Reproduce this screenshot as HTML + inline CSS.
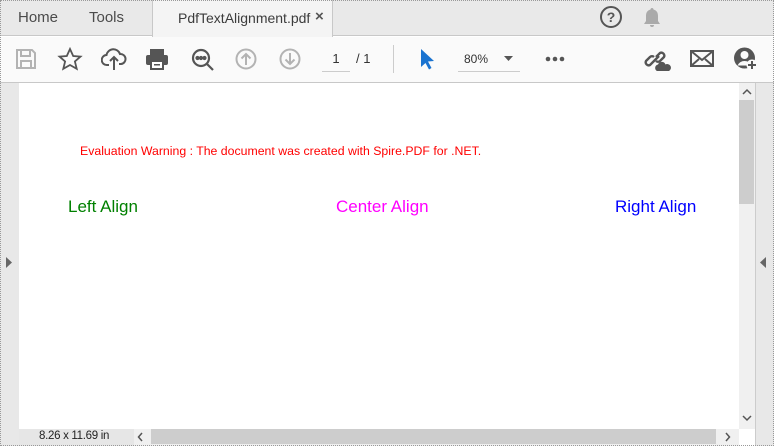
<!DOCTYPE html>
<html><head><meta charset="utf-8"><style>
*{margin:0;padding:0;box-sizing:border-box}
body{width:774px;height:446px;overflow:hidden;position:relative;background:#fff;font-family:"Liberation Sans",sans-serif}
.a{position:absolute}
</style></head><body>
<div class="a" style="left:0;top:0;width:774px;height:36px;background:#e9e9e9;border-bottom:1px solid #c8c8c8"></div>
<div class="a" style="left:18px;top:9px;font-size:15px;color:#4b4b4b">Home</div>
<div class="a" style="left:89px;top:9px;font-size:15px;color:#4b4b4b">Tools</div>
<div class="a" style="left:152px;top:0;width:181px;height:37px;background:#f4f4f4;border-left:1px solid #c8c8c8;border-right:1px solid #c8c8c8"></div>
<div class="a" style="left:178px;top:10px;font-size:14px;color:#3c3c3c">PdfTextAlignment.pdf</div>
<div class="a" style="left:315px;top:8px;font-size:15px;color:#555;font-weight:bold">×</div>
<svg class="a" style="left:599px;top:5px" width="24" height="24"><circle cx="12" cy="12" r="10" fill="none" stroke="#555" stroke-width="2"/><text x="12" y="17" font-size="14" font-weight="bold" text-anchor="middle" fill="#555" font-family="Liberation Sans">?</text></svg>
<svg class="a" style="left:641px;top:6px" width="22" height="22"><path d="M11 2c1 0 1.5.8 1.5 1.5C16 4.5 17 7 17 10v5l2 3H3l2-3v-5c0-3 1-5.5 4.5-6.5C9.5 2.8 10 2 11 2zM9 19h4c0 1.5-1 2-2 2s-2-.5-2-2z" fill="#aaa"/></svg>
<div class="a" style="left:0;top:37px;width:774px;height:46px;background:#fafafa;border-bottom:1px solid #c8c8c8"></div>
<svg class="a" style="left:14px;top:47px" width="24" height="24" fill="none" stroke="#b3b3b3" stroke-width="2"><path d="M3 3h15l3 3v15H3z"/><path d="M7 3v6h9V3M7 21v-7h10v7"/></svg>
<svg class="a" style="left:57px;top:47px" width="26" height="24" fill="none" stroke="#555" stroke-width="1.8"><path d="M13 2l3.2 7 7.3.6-5.6 4.9 1.8 7.3L13 18l-6.7 3.8 1.8-7.3L2.5 9.6 9.8 9z"/></svg>
<svg class="a" style="left:101px;top:46px" width="26" height="26" fill="none" stroke="#555" stroke-width="2"><path d="M8 19H6a5 5 0 0 1-.5-10A7 7 0 0 1 19 8a5 5 0 0 1 1 10h-2"/><path d="M13 24V11M9 15l4-4 4 4"/></svg>
<svg class="a" style="left:145px;top:47px" width="24" height="24"><rect x="5" y="2" width="14" height="6" fill="#555"/><rect x="1" y="8" width="22" height="10" rx="2" fill="#555"/><rect x="6" y="14" width="12" height="8" fill="#fff" stroke="#555" stroke-width="2"/><rect x="9" y="17" width="6" height="1.5" fill="#555"/></svg>
<svg class="a" style="left:190px;top:47px" width="26" height="26" fill="none" stroke="#555" stroke-width="2.2"><circle cx="11" cy="11" r="8"/><path d="M17 17l6 6"/><circle cx="7.5" cy="11" r="1" fill="#555"/><circle cx="11" cy="11" r="1" fill="#555"/><circle cx="14.5" cy="11" r="1" fill="#555"/></svg>
<svg class="a" style="left:235px;top:48px" width="22" height="22" fill="none" stroke="#b3b3b3" stroke-width="2"><circle cx="11" cy="11" r="9.5"/><path d="M11 17V6M6.5 10.5L11 6l4.5 4.5"/></svg>
<svg class="a" style="left:279px;top:48px" width="22" height="22" fill="none" stroke="#b3b3b3" stroke-width="2"><circle cx="11" cy="11" r="9.5"/><path d="M11 5v11M6.5 11.5L11 16l4.5-4.5"/></svg>
<div class="a" style="left:322px;top:51px;width:28px;font-size:13px;color:#333;text-align:center">1</div>
<div class="a" style="left:322px;top:71px;width:28px;height:1px;background:#ccc"></div>
<div class="a" style="left:356px;top:51px;font-size:13px;color:#333">/ 1</div>
<div class="a" style="left:393px;top:45px;width:1px;height:28px;background:#ccc"></div>
<svg class="a" style="left:419px;top:48px" width="18" height="22"><path d="M2 1l13 12-6 .5 3.5 6.5-2.5 1.5-3.5-6.5L2 19z" fill="#1a73d0"/></svg>
<div class="a" style="left:464px;top:52px;font-size:12px;color:#333">80%</div>
<svg class="a" style="left:504px;top:56px" width="10" height="6"><path d="M0 0h9l-4.5 5z" fill="#555"/></svg>
<div class="a" style="left:458px;top:71px;width:62px;height:1px;background:#ccc"></div>
<svg class="a" style="left:545px;top:56px" width="20" height="6"><circle cx="3" cy="3" r="2.3" fill="#555"/><circle cx="10" cy="3" r="2.3" fill="#555"/><circle cx="17" cy="3" r="2.3" fill="#555"/></svg>
<svg class="a" style="left:644px;top:47px" width="28" height="26" fill="none" stroke="#555" stroke-width="2.4"><path d="M10 14l-4 4a3 3 0 0 1-4-4l4-4a3 3 0 0 1 4 0M12 10l4-4a3 3 0 0 1 4 4l-4 4a3 3 0 0 1-4 0M9 15l6-6"/><path d="M13 24a3.5 3.5 0 0 1 1-6.5 4 4 0 0 1 7.5 0A3.300 3.300 0 0 1 25 24z" fill="#555" stroke="none"/></svg>
<svg class="a" style="left:690px;top:49px" width="24" height="20" fill="none" stroke="#555" stroke-width="2"><rect x="1" y="2" width="22" height="15"/><path d="M1 2l11 9 11-9M1 17l8-7M23 17l-8-7"/></svg>
<svg class="a" style="left:733px;top:46px" width="26" height="26"><circle cx="11.5" cy="12" r="10.5" fill="#555"/><circle cx="11.5" cy="9" r="4" fill="#fafafa"/><path d="M4.5 19.5a7.5 7 0 0 1 14 0" fill="#fafafa"/><circle cx="19" cy="19" r="5.5" fill="#fafafa"/><path d="M19 15v8M15 19h8" stroke="#555" stroke-width="2"/></svg>
<div class="a" style="left:0;top:83px;width:19px;height:363px;background:#e8e8e8"></div>
<svg class="a" style="left:6px;top:257px" width="8" height="12"><path d="M0 0l6 5.5L0 11z" fill="#666"/></svg>
<div class="a" style="left:739px;top:83px;width:16px;height:346px;background:#f0f0f0"></div>
<div class="a" style="left:739px;top:100px;width:15px;height:104px;background:#cdcdcd"></div>
<svg class="a" style="left:742px;top:88px" width="10" height="7" fill="none" stroke="#555" stroke-width="1.5"><path d="M1 6l4-4 4 4"/></svg>
<svg class="a" style="left:742px;top:415px" width="10" height="7" fill="none" stroke="#555" stroke-width="1.5"><path d="M1 1l4 4 4-4"/></svg>
<div class="a" style="left:755px;top:83px;width:19px;height:363px;background:#e8e8e8;border-left:1px solid #ccc"></div>
<svg class="a" style="left:760px;top:257px" width="8" height="12"><path d="M6 0L0 5.5 6 11z" fill="#666"/></svg>
<div class="a" style="left:80px;top:144px;font-size:12.3px;color:#ff0000;white-space:nowrap">Evaluation Warning : The document was created with Spire.PDF for .NET.</div>
<div class="a" style="left:68px;top:197px;font-size:17px;color:#008000;white-space:nowrap">Left Align</div>
<div class="a" style="left:336px;top:197px;font-size:17px;color:#ff00ff;white-space:nowrap">Center Align</div>
<div class="a" style="left:615px;top:197px;font-size:17px;color:#0000ff;white-space:nowrap">Right Align</div>
<div class="a" style="left:19px;top:429px;width:720px;height:17px;background:#f0f0f0"></div>
<div class="a" style="left:19px;top:429px;width:115px;height:17px;background:#e6e6e6"></div>
<div class="a" style="left:39px;top:430px;font-size:11.5px;color:#222;letter-spacing:-0.3px">8.26 x 11.69 in</div>
<div class="a" style="left:151px;top:429px;width:565px;height:15px;background:#cdcdcd"></div>
<svg class="a" style="left:137px;top:432px" width="7" height="10" fill="none" stroke="#555" stroke-width="1.5"><path d="M5 1L1.5 5 5 9"/></svg>
<svg class="a" style="left:724px;top:432px" width="7" height="10" fill="none" stroke="#555" stroke-width="1.5"><path d="M2 1l3.5 4L2 9"/></svg>
<div class="a" style="left:0;top:0;width:774px;height:446px;border:1px dotted #999"></div>
</body></html>
